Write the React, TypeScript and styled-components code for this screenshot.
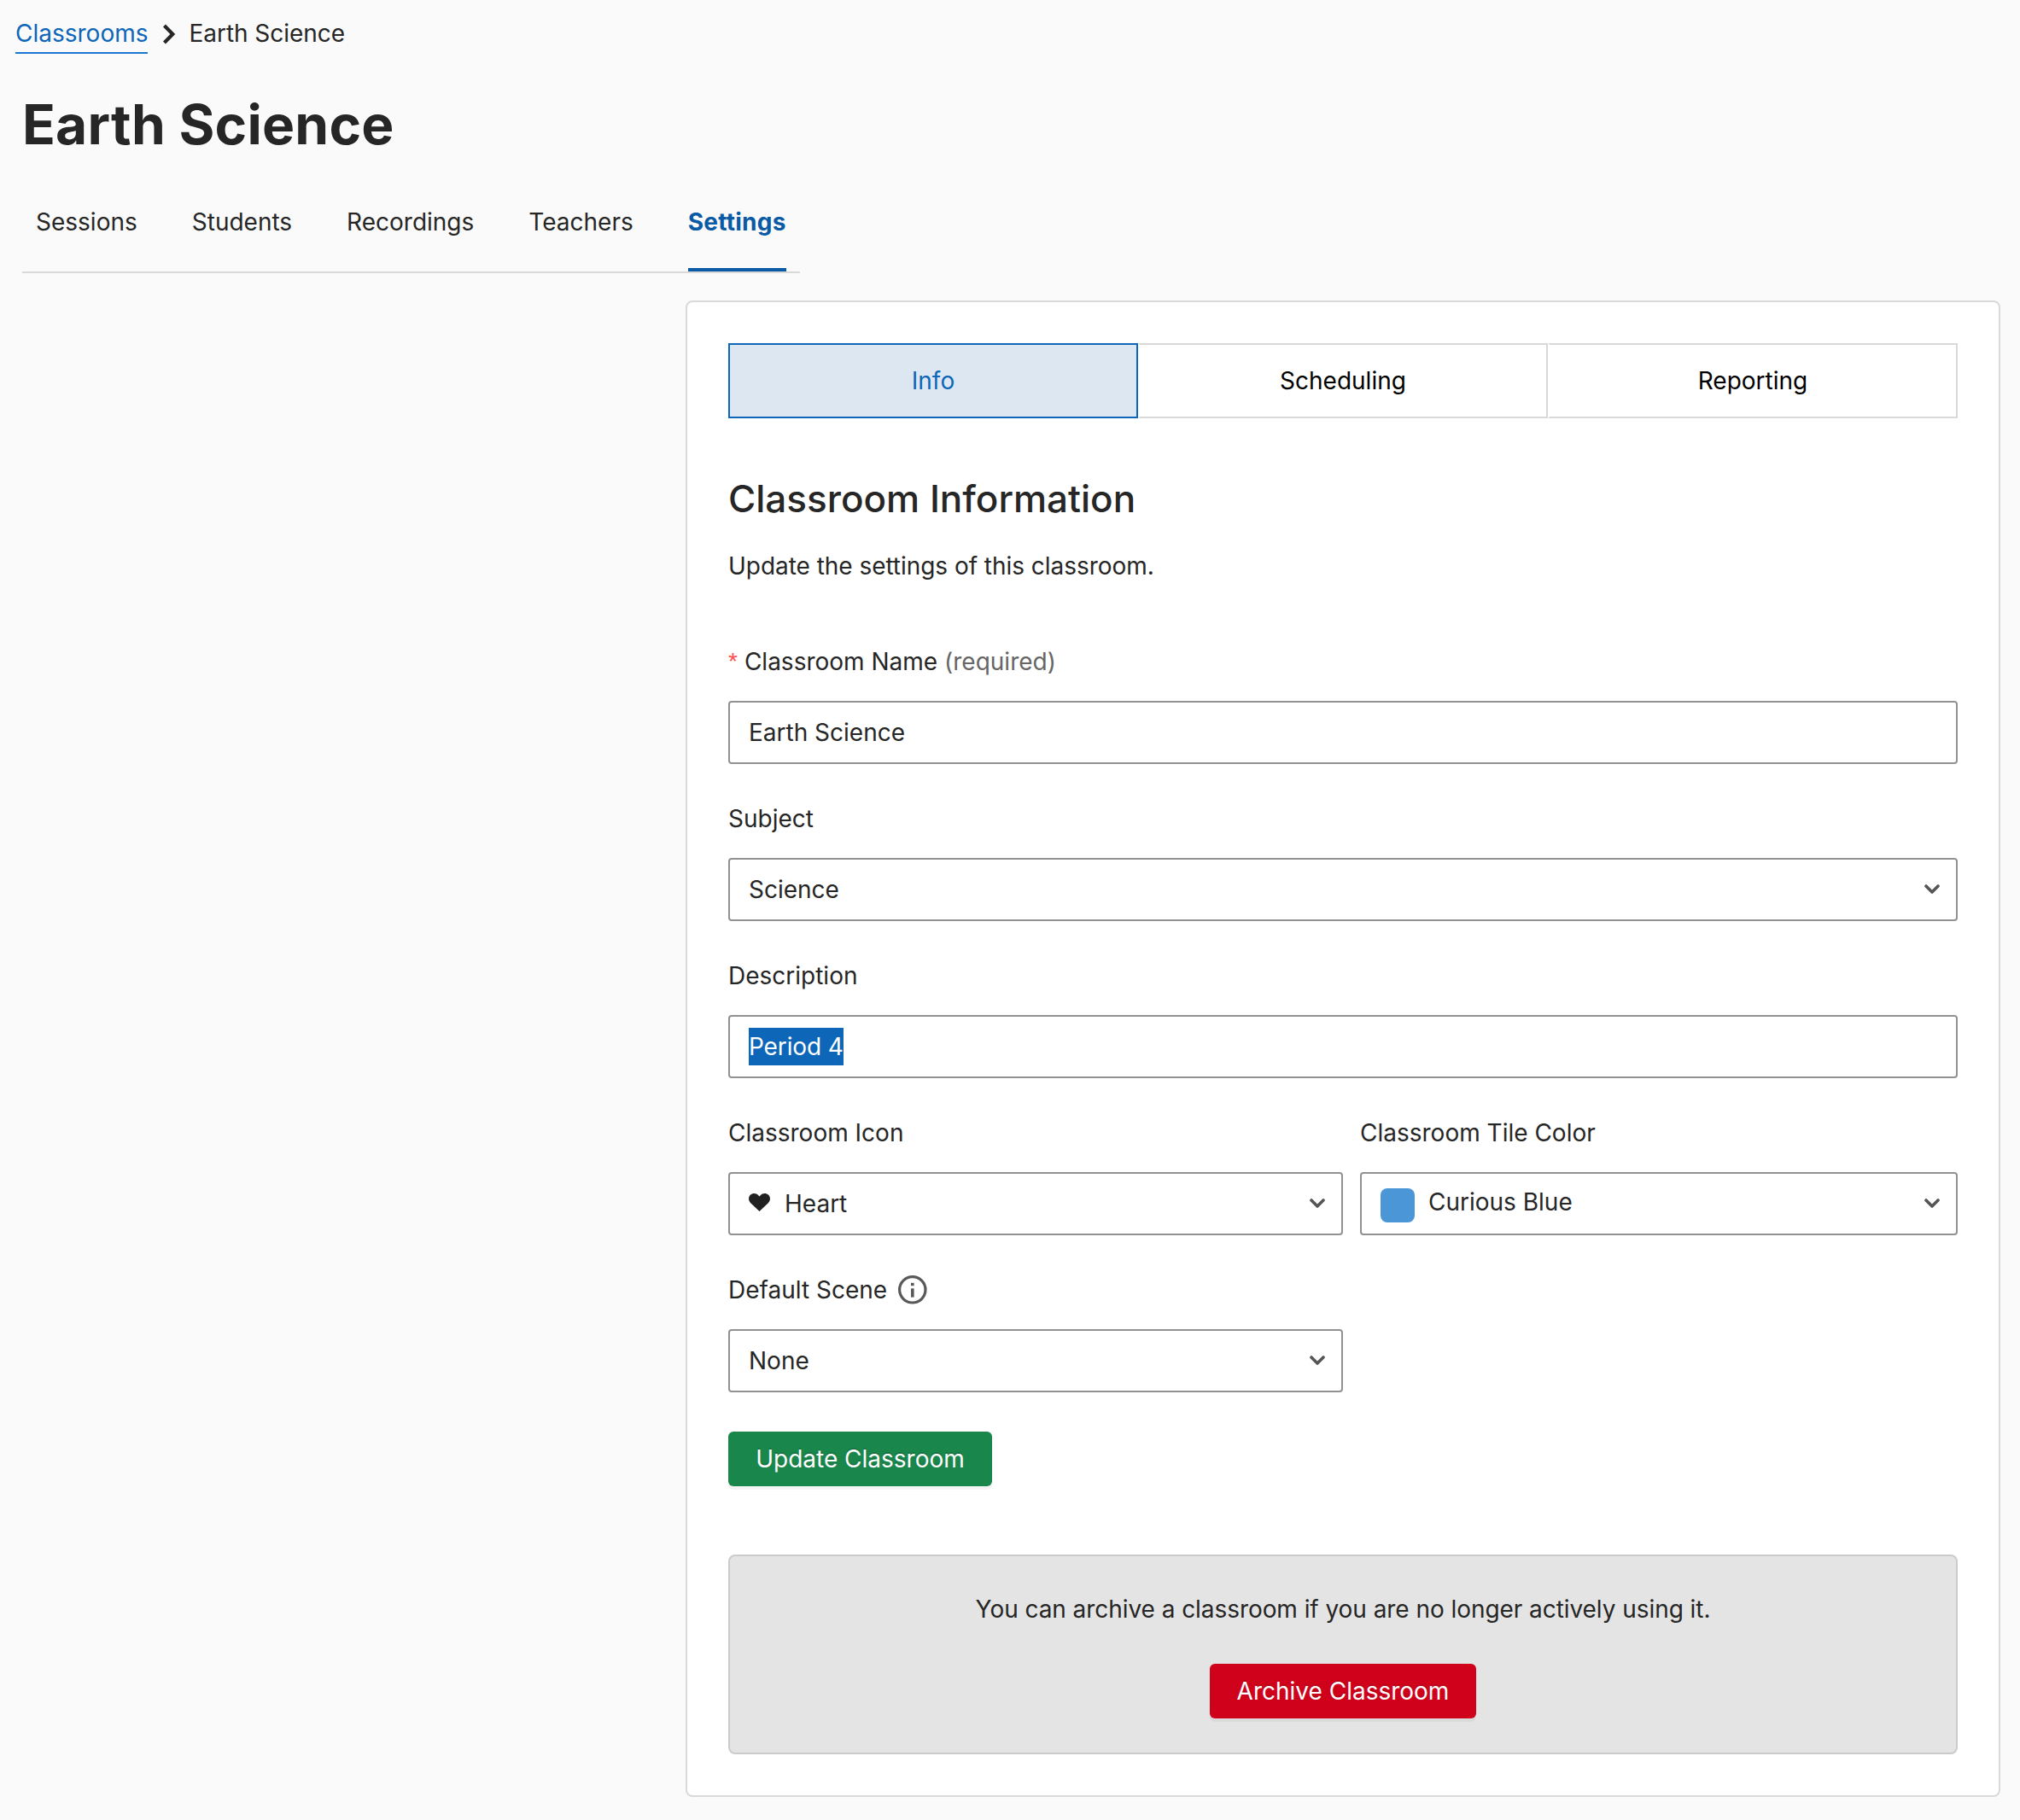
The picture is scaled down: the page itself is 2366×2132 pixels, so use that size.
import React, { useState } from "react";
import styled, { createGlobalStyle } from "styled-components";

const Colors = {
  bg: "#fafafa",
  text: "#262626",
  link: "#0d66b8",
  linkActive: "#0a5aa6",
  border: "#d9d9d9",
  inputBorder: "#919191",
  green: "#19864b",
  red: "#d0021b",
};

const GlobalStyle = createGlobalStyle`
  * {
    box-sizing: border-box;
  }
  body {
    margin: 0;
    background-color: ${Colors.bg};
    color: ${Colors.text};
    font-family: Inter, "Liberation Sans", sans-serif;
    font-size: 28px;
    line-height: 44px;
  }
`;

const Page = styled.div`
  width: 2366px;
  height: 2132px;
  padding-top: 17px;
`;

const Breadcrumb = styled.nav`
  display: flex;
  align-items: flex-start;
  padding-left: 18px;
  height: 46px;
`;

const BreadcrumbLink = styled.a`
  color: ${Colors.link};
  border-bottom: 2px solid #1976d2;
`;

const BreadcrumbArrow = styled.svg`
  width: 16px;
  height: 26px;
  margin: 10px 15px 0 17px;
`;

const BreadcrumbCurrent = styled.span`
  letter-spacing: -0.04px;
`;

const Title = styled.h1`
  margin: 43px 0 0 26px;
  font-size: 64px;
  line-height: 80px;
  font-weight: 700;
  letter-spacing: 0.24px;
`;

const Tabs = styled.div`
  display: flex;
  gap: 64px;
  width: 911px;
  margin: 52px 0 0 26px;
  padding: 0 16px;
  border-bottom: 2px solid ${Colors.border};
`;

const Tab = styled.div<{ $active: boolean }>`
  padding-bottom: 32px;
  border-bottom: 4px solid
    ${(props) => (props.$active ? Colors.linkActive : "transparent")};
  color: ${(props) => (props.$active ? Colors.linkActive : Colors.text)};
  font-weight: ${(props) => (props.$active ? 700 : 400)};
  letter-spacing: ${(props) => (props.$active ? "0.25px" : "normal")};
  white-space: nowrap;
  cursor: pointer;
`;

const Card = styled.section`
  width: 1540px;
  height: 1753px;
  margin: 32px 0 0 803px;
  padding: 48px;
  background-color: #fff;
  border: 2px solid ${Colors.border};
  border-radius: 8px;
`;

const Segments = styled.div`
  display: flex;
  height: 88px;
`;

const Segment = styled.div<{ $active: boolean }>`
  flex: 1;
  display: flex;
  justify-content: center;
  align-items: center;
  border: 2px solid ${(props) => (props.$active ? Colors.link : Colors.border)};
  background-color: ${(props) => (props.$active ? "#dde7f1" : "#fff")};
  color: ${(props) => (props.$active ? Colors.link : "#000")};
  cursor: pointer;

  & + & {
    border-left-color: #fff;
  }
`;

const Heading = styled.h2`
  margin: 66px 0 29px;
  font-size: 44px;
  line-height: 56px;
  font-weight: 500;
`;

const Intro = styled.p`
  margin: 0 0 68px;
  letter-spacing: -0.04px;
`;

const Form = styled.div`
  display: grid;
  grid-template-columns: 720px 700px;
  column-gap: 20px;
  row-gap: 42px;
`;

const FormItem = styled.div<{ $wide?: boolean }>`
  grid-column: ${(props) => (props.$wide ? "1 / -1" : "auto")};
`;

const Label = styled.div`
  display: flex;
  align-items: center;
  height: 44px;
  margin-bottom: 24px;
  white-space: pre;
`;

const Asterisk = styled.span`
  margin-right: 8px;
  color: #ff4d4f;
  font-family: "Liberation Sans", sans-serif;
`;

const Optional = styled.span`
  color: #666;
`;

const Field = styled.div`
  display: flex;
  align-items: center;
  height: 74px;
  padding: 0 19px 0 22px;
  background-color: #fff;
  border: 2px solid ${Colors.inputBorder};
  border-radius: 4px;
`;

const Selected = styled.span`
  background-color: ${Colors.link};
  color: #fff;
  letter-spacing: -0.12px;
`;

const Swatch = styled.span`
  width: 40px;
  height: 40px;
  margin: 4px 16px 0 0;
  border-radius: 8px;
  background-color: #4b96d7;
`;

const SwatchName = styled.span`
  padding-bottom: 4px;
`;

const HeartSvg = styled.svg`
  width: 25px;
  height: 21px;
  margin: 0 17px 3px 0;
`;

const Caret = styled.svg`
  width: 18px;
  height: 11px;
  margin: 0 0 1px auto;
`;

const InfoSvg = styled.svg`
  width: 34px;
  height: 34px;
  margin-left: 13px;
`;

const Button = styled.button<{ $color: string; $width: number }>`
  width: ${(props) => props.$width}px;
  height: 64px;
  padding: 0;
  border: none;
  border-radius: 6px;
  background-color: ${(props) => props.$color};
  color: #fff;
  font: inherit;
  text-shadow: 0 -2px 0 rgba(0, 0, 0, 0.12);
  box-shadow: 0 4px 0 rgba(0, 0, 0, 0.045);
  cursor: pointer;
`;

const Actions = styled.div`
  display: flex;
  margin: 46px 0 80px;
`;

const ArchiveBox = styled.div`
  display: flex;
  flex-direction: column;
  align-items: center;
  gap: 42px;
  height: 234px;
  padding-top: 40px;
  background-color: #e4e4e4;
  border: 2px solid #cbcbcb;
  border-radius: 8px;
`;

const ArchiveText = styled.span`
  letter-spacing: -0.06px;
`;

const Chevron = () => (
  <Caret viewBox="0 0 18 11" fill="none">
    <path
      d="M2 2l7 7 7-7"
      stroke="#555"
      strokeWidth="3.600"
      strokeLinecap="round"
      strokeLinejoin="round"
    />
  </Caret>
);

const HeartIcon = () => (
  <HeartSvg viewBox="0 0 25 21" fill="#212121">
    <path d="M12.5 21L2.2 11.2C-.7 8.3-.6 4.2 1.9 1.8 4.6-.7 8.6-.5 11 2l1.500 1.600L14 2c2.400-2.500 6.400-2.700 9.100-.2 2.500 2.400 2.600 6.500-.3 9.400z" />
  </HeartSvg>
);

const InfoIcon = () => (
  <InfoSvg viewBox="0 0 34 34" fill="none">
    <circle cx="16.800" cy="16.800" r="15.200" stroke="#595959" strokeWidth="3.200" />
    <rect x="15" y="8.800" width="3.600" height="3.400" fill="#595959" />
    <rect x="15" y="15.300" width="3.600" height="10.300" fill="#595959" />
  </InfoSvg>
);

const tabs = ["Sessions", "Students", "Recordings", "Teachers", "Settings"];
const segments = ["Info", "Scheduling", "Reporting"];

const App: React.FC = () => {
  const [tab, setTab] = useState("Settings");
  const [segment, setSegment] = useState("Info");

  return (
    <Page>
      <GlobalStyle />
      <Breadcrumb>
        <BreadcrumbLink>Classrooms</BreadcrumbLink>
        <BreadcrumbArrow viewBox="0 0 16 26" fill="none">
          <path d="M2.500 3l9.800 10-9.800 10" stroke={Colors.text} strokeWidth="4.200" />
        </BreadcrumbArrow>
        <BreadcrumbCurrent>Earth Science</BreadcrumbCurrent>
      </Breadcrumb>
      <Title>Earth Science</Title>
      <Tabs>
        {tabs.map((name) => (
          <Tab key={name} $active={name === tab} onClick={() => setTab(name)}>
            {name}
          </Tab>
        ))}
      </Tabs>
      <Card>
        <Segments>
          {segments.map((name) => (
            <Segment
              key={name}
              $active={name === segment}
              onClick={() => setSegment(name)}
            >
              {name}
            </Segment>
          ))}
        </Segments>
        <Heading>Classroom Information</Heading>
        <Intro>Update the settings of this classroom.</Intro>
        <Form>
          <FormItem $wide>
            <Label>
              <Asterisk>*</Asterisk>
              <span>
                Classroom Name <Optional>(required)</Optional>
              </span>
            </Label>
            <Field>Earth Science</Field>
          </FormItem>
          <FormItem $wide>
            <Label>Subject</Label>
            <Field>
              Science
              <Chevron />
            </Field>
          </FormItem>
          <FormItem $wide>
            <Label>Description</Label>
            <Field>
              <Selected>Period 4</Selected>
            </Field>
          </FormItem>
          <FormItem>
            <Label>Classroom Icon</Label>
            <Field>
              <HeartIcon />
              Heart
              <Chevron />
            </Field>
          </FormItem>
          <FormItem>
            <Label>Classroom Tile Color</Label>
            <Field>
              <Swatch />
              <SwatchName>Curious Blue</SwatchName>
              <Chevron />
            </Field>
          </FormItem>
          <FormItem>
            <Label>
              Default Scene
              <InfoIcon />
            </Label>
            <Field>
              None
              <Chevron />
            </Field>
          </FormItem>
        </Form>
        <Actions>
          <Button $color={Colors.green} $width={309}>
            Update Classroom
          </Button>
        </Actions>
        <ArchiveBox>
          <ArchiveText>
            You can archive a classroom if you are no longer actively using it.
          </ArchiveText>
          <Button $color={Colors.red} $width={312}>
            Archive Classroom
          </Button>
        </ArchiveBox>
      </Card>
    </Page>
  );
};

export default App;
